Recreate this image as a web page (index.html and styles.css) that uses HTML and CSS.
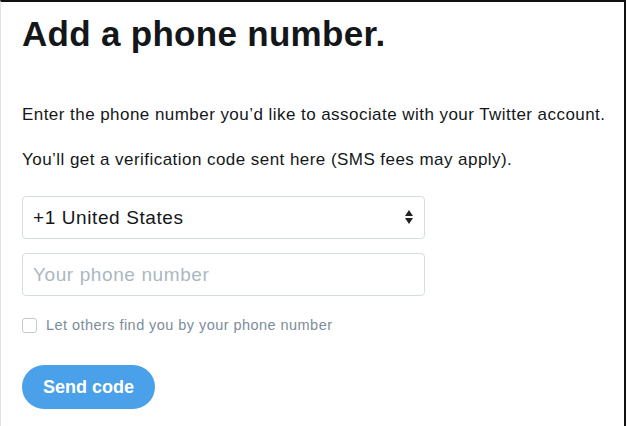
FILE: index.html
```html
<!DOCTYPE html>
<html lang="en">
<head>
    <meta charset="UTF-8">
    <meta name="viewport" content="width=device-width, initial-scale=1.0">
    <title>Add a phone number</title>
    <link rel="stylesheet" href="styles.css">
</head>
<body>
    <div class="frame">
        <h1>Add a phone number.</h1>

        <p class="lead">Enter the phone number you’d like to associate with your Twitter account.</p>
        <p class="note">You’ll get a verification code sent here (SMS fees may apply).</p>

        <form class="phone-form">
            <div class="select-wrap">
                <select class="field">
                    <option>+1 United States</option>
                </select>
                <svg class="arrows" width="8" height="14" viewBox="0 0 8 14">
                    <path d="M4 0 L8 6 L0 6 Z" fill="#222"/>
                    <path d="M0 8 L8 8 L4 14 Z" fill="#222"/>
                </svg>
            </div>

            <input class="field" type="tel" placeholder="Your phone number">

            <label class="check">
                <input type="checkbox">
                <span>Let others find you by your phone number</span>
            </label>

            <button type="submit">Send code</button>
        </form>
    </div>
</body>
</html>
```

FILE: styles.css
```css
html, body {
    margin: 0;
    height: 100%;
    background: #fff;
}
body {
    font-family: "Liberation Sans", Arial, sans-serif;
    color: #14171a;
}
.frame {
    box-sizing: border-box;
    height: 100%;
    width: 626px;
    border-top: 2px solid #111;
    border-right: 2px solid #111;
    border-left: 1px solid #e1e1e1;
    padding: 11px 0 0 21px;
}
h1 {
    margin: 0;
    font-size: 35px;
    font-weight: bold;
    letter-spacing: 0.3px;
    line-height: 42px;
}
.lead {
    margin: 50px 0 0;
    font-size: 17px;
    letter-spacing: 0.45px;
    line-height: 20px;
}
.note {
    margin: 25px 0 0;
    font-size: 17px;
    letter-spacing: 0.45px;
    line-height: 20px;
}
.phone-form {
    margin-top: 26px;
    width: 403px;
}
.select-wrap {
    position: relative;
}
.field {
    display: block;
    box-sizing: border-box;
    width: 100%;
    height: 43px;
    padding: 0 10px;
    border: 1px solid #d4dde3;
    border-radius: 4px;
    background: #fff;
    font-family: inherit;
    font-size: 19px;
    letter-spacing: 0.6px;
    color: #14171a;
    outline: none;
}
select.field {
    appearance: none;
    -webkit-appearance: none;
}
.arrows {
    position: absolute;
    right: 12px;
    top: 14px;
    pointer-events: none;
}
input.field {
    margin-top: 14px;
}
input.field::placeholder {
    color: #aab8c2;
}
.check {
    display: flex;
    align-items: center;
    gap: 9px;
    margin-top: 21px;
    font-size: 14.5px;
    letter-spacing: 0.45px;
    color: #7d8d9b;
}
.check input {
    appearance: none;
    -webkit-appearance: none;
    margin: 0;
    width: 15px;
    height: 15px;
    border: 1px solid #c4c9cd;
    border-radius: 3px;
    background: #fff;
}
button {
    margin-top: 32px;
    height: 44px;
    padding: 0 21px;
    border: none;
    border-radius: 22px;
    background: #4aa1e9;
    color: #fff;
    font-family: inherit;
    font-size: 18px;
    font-weight: bold;
    cursor: pointer;
}
```
